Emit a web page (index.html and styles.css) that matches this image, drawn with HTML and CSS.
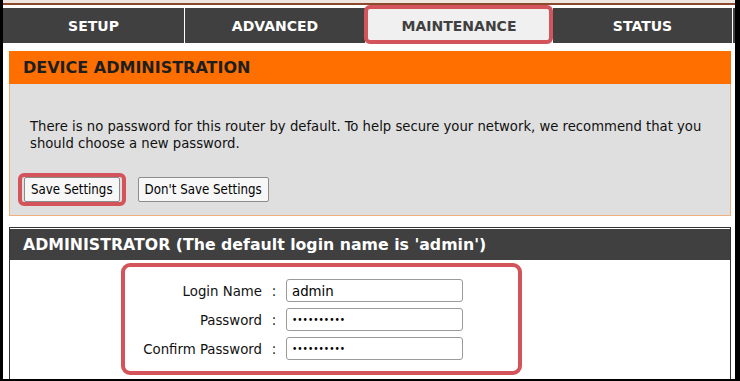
FILE: index.html
```html
<!DOCTYPE html>
<html lang="en">
<head>
<meta charset="utf-8">
<title>Device Administration</title>
<link rel="stylesheet" href="styles.css">
</head>
<body>
<div class="screen">
  <div class="topbar"></div>
  <nav class="tabs">
    <div class="tab">SETUP</div>
    <div class="tab">ADVANCED</div>
    <div class="tab tab-active">MAINTENANCE</div>
    <div class="tab">STATUS</div>
  </nav>
  <section class="panel">
    <h2 class="panel-head">DEVICE ADMINISTRATION</h2>
    <div class="panel-body">
      <p class="note">There is no password for this router by default. To help secure your network, we recommend that you should choose a new password.</p>
      <div class="actions">
        <span class="mark"><button class="btn" type="button">Save Settings</button></span>
        <button class="btn" type="button">Don't Save Settings</button>
      </div>
    </div>
  </section>
  <section class="admin">
    <h2 class="admin-head">ADMINISTRATOR (The default login name is 'admin')</h2>
    <div class="admin-body">
      <div class="form">
        <label class="lbl" for="login">Login Name</label><span class="colon">:</span><input class="field" id="login" type="text" value="admin">
        <label class="lbl" for="pw">Password</label><span class="colon">:</span><input class="field field-pw" id="pw" type="password" value="abcdefghij">
        <label class="lbl" for="pw2">Confirm Password</label><span class="colon">:</span><input class="field field-pw" id="pw2" type="password" value="abcdefghij">
      </div>
    </div>
  </section>
</div>
</body>
</html>
```
FILE: styles.css
```css
html, body {
  margin: 0;
  padding: 0;
  background: #fff;
}

.screen {
  box-sizing: border-box;
  width: 740px;
  height: 381px;
  border-left: 3px solid #000;
  border-right: 5px solid #000;
  border-bottom: 2px solid #000;
  display: flex;
  flex-direction: column;
  overflow: hidden;
  font-family: "DejaVu Sans Condensed", "DejaVu Sans", sans-serif;
  color: #111;
}

.topbar {
  flex: none;
  height: 3px;
  background: #efe6df;
  border-bottom: 2px solid #8b4a2b;
  margin-bottom: 3px;
}

.tabs {
  flex: none;
  display: grid;
  grid-template-columns: 182px 181px 187px 180px 1fr;
  height: 35px;
  background: #404040;
  border-bottom: 1px solid #fff;
}

.tab {
  box-sizing: border-box;
  border-right: 1px solid #fff;
  display: flex;
  align-items: center;
  justify-content: center;
  color: #fff;
  font-family: "DejaVu Sans", sans-serif;
  font-weight: bold;
  font-size: 14px;
}

.tab-active {
  position: relative;
  background: #f0f0f0;
  color: #404040;
}

.tab-active::after {
  content: "";
  position: absolute;
  left: -2px;
  right: -1px;
  top: -3px;
  bottom: -1px;
  border: 4px solid #d4545b;
  border-radius: 6px;
}

.panel {
  flex: none;
  margin: 7px 4px 0 6px;
}

.panel-head {
  margin: 0;
  height: 33px;
  box-sizing: border-box;
  padding-left: 14px;
  display: flex;
  align-items: center;
  background: #ff6f00;
  color: #1e1e1e;
  font-family: "DejaVu Sans", sans-serif;
  font-weight: bold;
  font-size: 16px;
}

.panel-body {
  background: #dfdfdf;
  border: 1px solid #eeb07c;
  border-top: none;
  padding: 33px 0 9px 0;
}

.note {
  margin: 0 20px 22px 20px;
  font-size: 14.7px;
  line-height: 17px;
}

.actions {
  display: flex;
  align-items: center;
  gap: 12px;
  margin-left: 8px;
}

.mark {
  display: inline-flex;
  border: 4px solid #d4545b;
  border-radius: 6px;
  padding: 0 2px;
}

.btn {
  height: 25px;
  padding: 0 6px;
  margin: 0;
  background: #f7f7f7;
  border: 1px solid #8c8c8c;
  border-radius: 2px;
  color: #000;
  font-family: "DejaVu Sans Condensed", "DejaVu Sans", sans-serif;
  font-size: 13.2px;
}

.admin {
  flex: 1;
  margin: 11px 4px 0 6px;
  border: 1px solid #333;
  border-bottom: none;
  padding-top: 1px;
  display: flex;
  flex-direction: column;
}

.admin-head {
  margin: 0;
  height: 31px;
  box-sizing: border-box;
  padding-left: 13px;
  display: flex;
  align-items: center;
  background: #404040;
  color: #fff;
  font-family: "DejaVu Sans", sans-serif;
  font-weight: bold;
  font-size: 15.75px;
}

.admin-body {
  padding: 3px 0 0 111px;
}

.form {
  width: max-content;
  display: grid;
  grid-template-columns: 137px 24px 177px;
  row-gap: 6px;
  align-items: center;
  padding: 12px 55px 11px 0;
  border: 4px solid #d4545b;
  border-radius: 9px;
}

.lbl {
  text-align: right;
  font-size: 14.8px;
}

.colon {
  text-align: center;
  font-size: 14.8px;
}

.field {
  box-sizing: border-box;
  width: 177px;
  height: 23px;
  margin: 0;
  padding: 0 5px;
  border: 1px solid #9a9a9a;
  border-radius: 3px;
  background: #fff;
  color: #000;
  font-family: "DejaVu Sans Condensed", "DejaVu Sans", sans-serif;
  font-size: 14.8px;
}

.field-pw {
  font-size: 10px;
}
```
